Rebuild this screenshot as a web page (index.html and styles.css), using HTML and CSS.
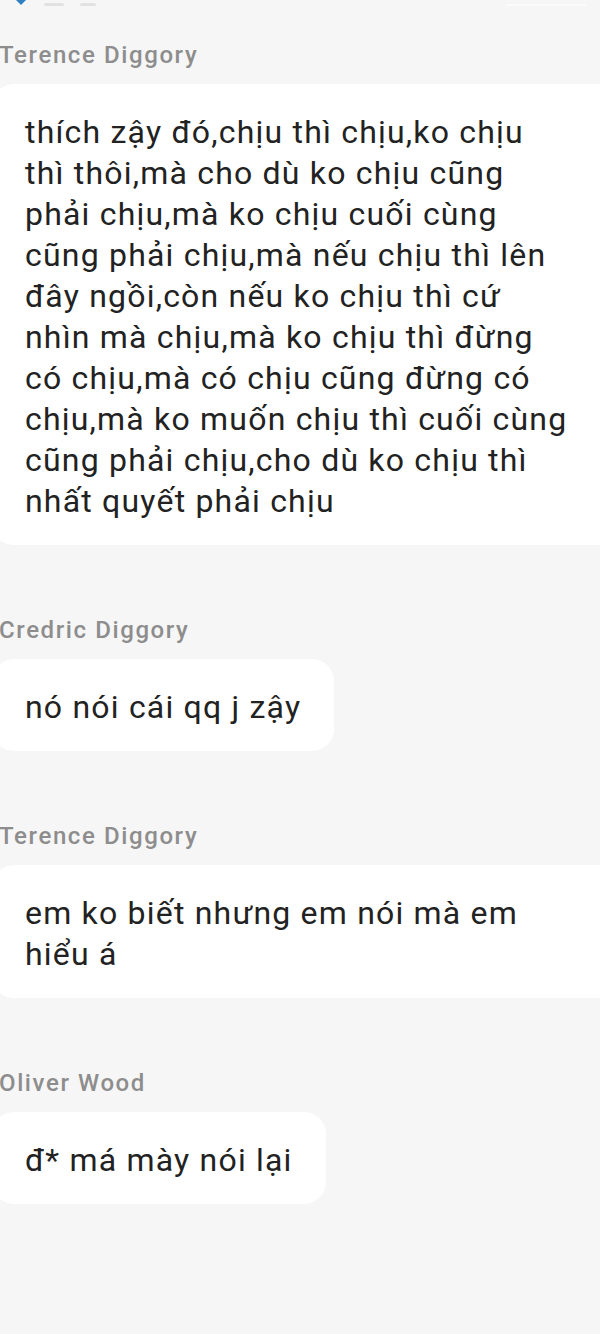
FILE: index.html
```html
<!DOCTYPE html>
<html>
<head>
    <title>Chat</title>
    <link rel="stylesheet" href="styles.css">
</head>
<body>
    <div class="status-bar">
        <span class="status-icon">
            <svg width="14" height="6" viewBox="0 0 14 6"><path d="M2 0 L7 5 L12 0 Z" fill="#2f7fc1"/></svg>
        </span>
        <span class="status-chip"></span>
        <span class="status-chip short"></span>
        <span class="status-right"></span>
    </div>

    <div class="thread">
        <div class="message">
            <div class="sender">Terence Diggory</div>
            <div class="bubble wide">thích zậy đó,chịu thì chịu,ko chịu<br>thì thôi,mà cho dù ko chịu cũng<br>phải chịu,mà ko chịu cuối cùng<br>cũng phải chịu,mà nếu chịu thì lên<br>đây ngồi,còn nếu ko chịu thì cứ<br>nhìn mà chịu,mà ko chịu thì đừng<br>có chịu,mà có chịu cũng đừng có<br>chịu,mà ko muốn chịu thì cuối cùng<br>cũng phải chịu,cho dù ko chịu thì<br>nhất quyết phải chịu</div>
        </div>

        <div class="message">
            <div class="sender">Credric Diggory</div>
            <div class="bubble">nó nói cái qq j zậy</div>
        </div>

        <div class="message">
            <div class="sender">Terence Diggory</div>
            <div class="bubble wide">em ko biết nhưng em nói mà em<br>hiểu á</div>
        </div>

        <div class="message">
            <div class="sender">Oliver Wood</div>
            <div class="bubble">đ* má mày nói lại</div>
        </div>
    </div>
</body>
</html>
```

FILE: styles.css
```css
body {
    margin: 0;
    background-color: #f6f6f6;
    font-family: Roboto, "Noto Sans", sans-serif;
    color: #222222;
    overflow: hidden;
}

/* only the bottom edge of the status bar is visible */
.status-bar {
    height: 6px;
    display: flex;
    align-items: flex-end;
    gap: 16px;
    padding: 0 14px;
    overflow: hidden;
}

.status-icon svg {
    display: block;
}

.status-chip {
    width: 20px;
    height: 3px;
    border-radius: 2px;
    background-color: #e2e2e2;
}

.status-chip.short {
    width: 16px;
}

.status-right {
    margin-left: auto;
    width: 80px;
    height: 2px;
    background-color: #fbfbfb;
}

.thread {
    margin-left: -8px;
    padding-top: 33px;
    display: flex;
    flex-direction: column;
    gap: 69px;
}

.message {
    display: flex;
    flex-direction: column;
    align-items: flex-start;
}

.sender {
    font-size: 24px;
    line-height: 32px;
    font-weight: 500;
    color: #8d8d8d;
    margin-left: 7px;
    margin-bottom: 13px;
    letter-spacing: 1.6px;
}

.bubble {
    background-color: #ffffff;
    border-radius: 22px;
    padding: 28px 33px 23px 33px;
    font-size: 32px;
    line-height: 41px;
    letter-spacing: 1.2px;
    white-space: nowrap;
}

/* long messages fill the row up to the right edge */
.bubble.wide {
    align-self: stretch;
    padding-right: 8px;
    border-radius: 22px 0 0 22px;
}
```
